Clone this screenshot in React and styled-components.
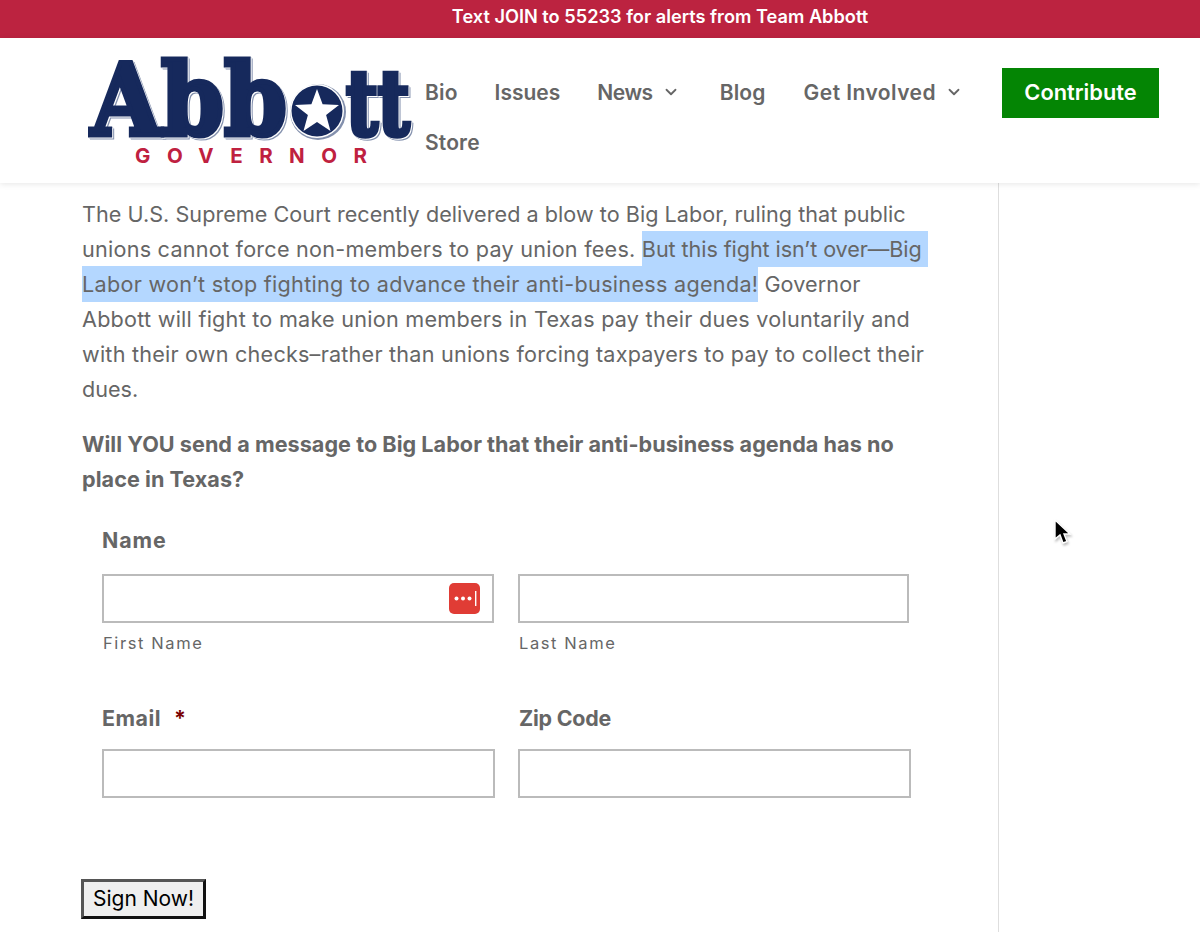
import styled, { createGlobalStyle } from 'styled-components';
import { ChevronDown } from 'lucide-react';

const GlobalStyle = createGlobalStyle`
    html, body {
        margin: 0;
        padding: 0;
        background: #fff;
        font-family: Inter, "Open Sans", sans-serif;
        overflow: hidden;
    }
    * {
        box-sizing: border-box;
    }
`;

const Page = styled.div`
    position: relative;
    width: 1200px;
    height: 932px;
    overflow: hidden;
`;

const TopBar = styled.div`
    height: 38px;
    background: #bc2340;
    color: #fff;
    font-size: 18.2px;
    font-weight: 600;
    line-height: 32px;
    text-align: center;
    padding-left: 120px;
`;

const Header = styled.header`
    position: relative;
    z-index: 1;
    display: flex;
    height: 145px;
    padding: 0 41px 0 88px;
    background: #fff;
    box-shadow: 0 1px 6px rgba(0, 0, 0, 0.1);
`;

const Logo = styled.svg`
    flex: none;
    width: 328px;
    height: 145px;
`;

const LogoWord = styled.g`
    fill: #16295c;
    stroke: #16295c;
    stroke-width: 5.4px;
    stroke-linejoin: miter;
    font-family: "DejaVu Serif", serif;
    font-weight: 700;
    filter: drop-shadow(1px 1px 0 #fff) drop-shadow(1px 1px 0 #8390ad);
`;

const LogoTagline = styled.text`
    fill: #bf2140;
    font-family: Inter, sans-serif;
    font-weight: 700;
    font-size: 20.5px;
`;

const Nav = styled.nav`
    display: flex;
    flex-wrap: wrap;
    align-content: flex-start;
    width: 577px;
    margin-left: 9px;
    padding-top: 29px;
`;

const NavItem = styled.a`
    display: flex;
    align-items: center;
    height: 50px;
    margin-right: ${({ $gap }) => $gap}px;
    color: #666;
    font-size: 21px;
    font-weight: 600;
    letter-spacing: ${({ $ls }) => $ls}px;
    svg {
        margin-left: 9px;
    }
`;

const ContributeButton = styled.a`
    flex: none;
    display: flex;
    align-items: center;
    justify-content: center;
    width: 157px;
    height: 50px;
    margin: 30px 0 0 auto;
    padding-bottom: 2px;
    background: #048504;
    color: #fff;
    font-size: 21.8px;
    font-weight: 600;
`;

const Main = styled.main`
    width: 999px;
    height: 749px;
    padding: 14px 0 0 82px;
    border-right: 1px solid #dedede;
`;

const Paragraph = styled.p`
    width: 860px;
    margin: 0 0 21px;
    color: #666;
    font-size: 21.6px;
    line-height: 34.9px;
    font-weight: ${({ $bold }) => ($bold ? 700 : 400)};
`;

const Spaced = styled.span`
    letter-spacing: ${({ $ls }) => $ls}px;
`;

const Highlight = styled.span`
    padding: 5px 0;
    background: #b4d7ff;
`;

const Form = styled.form`
    padding: 6px 0 0 20px;
    width: 850px;
`;

const FieldLabel = styled.div`
    color: #666;
    font-size: 21.4px;
    font-weight: 700;
    line-height: 32px;
    height: 32px;
    letter-spacing: ${({ $ls }) => $ls}px;
`;

const Required = styled.span`
    color: #790000;
    margin-left: 13px;
`;

const FieldRow = styled.div`
    display: grid;
    grid-template-columns: ${({ $wide }) => ($wide ? '393px 393px' : '392px 391px')};
    column-gap: ${({ $wide }) => ($wide ? 23 : 24)}px;
    margin-top: ${({ $top }) => $top}px;
`;

const InputWrap = styled.div`
    position: relative;
    height: 49px;
`;

const Input = styled.input`
    display: block;
    width: 100%;
    height: 100%;
    border: 2px solid #bbb;
    background: #fff;
    outline: none;
`;

const PasswordBadge = styled.svg`
    position: absolute;
    top: 9px;
    right: 14px;
    width: 31px;
    height: 31px;
`;

const SubLabel = styled.div`
    margin: 8px 0 0 1px;
    color: #666;
    font-size: 16.5px;
    line-height: 24px;
    letter-spacing: 1.6px;
`;

const SplitLabels = styled.div`
    display: grid;
    grid-template-columns: 417px 1fr;
    margin-top: 47px;
`;

const SubmitButton = styled.button`
    display: block;
    width: 125px;
    height: 40px;
    margin: 81px 0 0 -21px;
    padding: 0 0 2px;
    border: 3px solid;
    border-color: #555 #111 #111 #555;
    background: #efefef;
    color: #000;
    font-family: Inter, sans-serif;
    font-size: 21px;
`;

const Cursor = styled.svg`
    position: absolute;
    left: 1051px;
    top: 517px;
    width: 22px;
    height: 30px;
    filter: drop-shadow(1px 2px 1px rgba(0, 0, 0, 0.25));
`;

const navItems = [
    { label: 'Bio', gap: 37, ls: 0.15 },
    { label: 'Issues', gap: 37, ls: 0 },
    { label: 'News', gap: 40, ls: -0.45, menu: true },
    { label: 'Blog', gap: 38, ls: 0.15 },
    { label: 'Get Involved', gap: 30, ls: 0.45, menu: true },
    { label: 'Store', gap: 0, ls: 0.15 },
];

const AbbottLogo = () => {
    return (
        <Logo viewBox="0 0 328 145">
            <LogoWord>
                <text transform="translate(3 97) scale(0.867 0.95)" fontSize="104">Abb</text>
                <text transform="translate(258 97) scale(0.75 0.98)" fontSize="92">tt</text>
            </LogoWord>
            <circle cx="230" cy="74" r="28" fill="#8390ad" />
            <circle cx="229" cy="73" r="27" fill="#fff" />
            <circle cx="229" cy="73" r="25.5" fill="#16295c" />
            <polygon
                points="229,51 234.6,66.3 251,67 238.1,77.1 242.5,93 229,83.9 215.5,93 219.9,77.1 207,67 223.4,66.3"
                fill="#fff"
            />
            <LogoTagline x="47" y="125" textLength="232">GOVERNOR</LogoTagline>
        </Logo>
    );
};

const App = () => {
    return (
        <Page>
            <GlobalStyle />
            <TopBar>Text JOIN to 55233 for alerts from Team Abbott</TopBar>
            <Header>
                <AbbottLogo />
                <Nav>
                    {navItems.map((item) => (
                        <NavItem key={item.label} $gap={item.gap} $ls={item.ls}>
                            {item.label}
                            {item.menu && <ChevronDown size={18} strokeWidth={2.4} />}
                        </NavItem>
                    ))}
                </Nav>
                <ContributeButton>Contribute</ContributeButton>
            </Header>
            <Main>
                <Paragraph>
                    <Spaced $ls={0.04}>The U.S. Supreme Court recently delivered a blow to Big Labor, ruling that public</Spaced><br />
                    <Spaced $ls={0.24}>unions cannot force non-members to pay union fees. </Spaced>
                    <Highlight>
                        <Spaced $ls={-0.08}>But this fight isn’t over—Big{'\u00A0'}</Spaced><br />
                        <Spaced $ls={0.29}>Labor won’t stop fighting to advance their anti-business agenda!</Spaced>
                    </Highlight>{' '}
                    <Spaced $ls={0.1}>Governor</Spaced><br />
                    <Spaced $ls={0.25}>Abbott will fight to make union members in Texas pay their dues voluntarily and</Spaced><br />
                    <Spaced $ls={0.22}>with their own checks–rather than unions forcing taxpayers to pay to collect their</Spaced><br />
                    dues.
                </Paragraph>
                <Paragraph $bold>
                    <Spaced $ls={0.04}>Will YOU send a message to Big Labor that their anti-business agenda has no</Spaced><br />
                    <Spaced $ls={0.05}>place in Texas?</Spaced>
                </Paragraph>
                <Form>
                    <FieldLabel $ls={0.9}>Name</FieldLabel>
                    <FieldRow $top={18}>
                        <InputWrap>
                            <Input />
                            <PasswordBadge viewBox="0 0 31 31">
                                <rect width="31" height="31" rx="5" fill="#e03c35" />
                                <circle cx="7.5" cy="15.5" r="2" fill="#fff" />
                                <circle cx="14" cy="15.5" r="2" fill="#fff" />
                                <circle cx="20.5" cy="15.5" r="2" fill="#fff" />
                                <rect x="26" y="8" width="1.4" height="15" fill="#fff" />
                            </PasswordBadge>
                        </InputWrap>
                        <InputWrap>
                            <Input />
                        </InputWrap>
                    </FieldRow>
                    <FieldRow $top={0}>
                        <SubLabel>First Name</SubLabel>
                        <SubLabel>Last Name</SubLabel>
                    </FieldRow>
                    <SplitLabels>
                        <FieldLabel $ls={0.5}>
                            Email<Required>*</Required>
                        </FieldLabel>
                        <FieldLabel $ls={-0.2}>Zip Code</FieldLabel>
                    </SplitLabels>
                    <FieldRow $wide $top={15}>
                        <InputWrap>
                            <Input />
                        </InputWrap>
                        <InputWrap>
                            <Input />
                        </InputWrap>
                    </FieldRow>
                    <SubmitButton type="button">Sign Now!</SubmitButton>
                </Form>
            </Main>
            <Cursor viewBox="0 0 22 30">
                <path d="M4 3 L4 22 L9 18 L12 26 L16 24.5 L13 17 L19 17 Z" fill="#000" stroke="#fff" strokeWidth="1.4" />
            </Cursor>
        </Page>
    );
};

export default App;
